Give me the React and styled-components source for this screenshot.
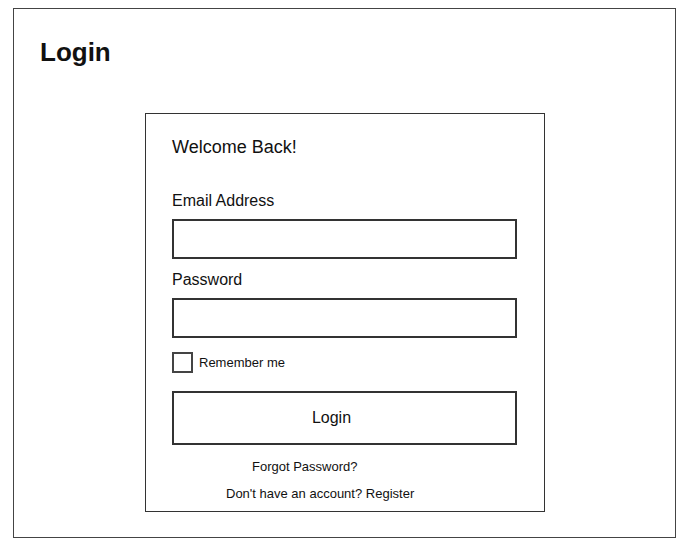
import React from 'react';
import styled, { createGlobalStyle } from 'styled-components';

const GlobalStyle = createGlobalStyle`
  html, body {
    margin: 0;
    padding: 0;
    background: #fff;
  }
  body {
    font-family: "Liberation Sans", Arial, sans-serif;
    color: #111;
  }
`;

const Frame = styled.div`
  box-sizing: border-box;
  margin: 8px 0 0 13px;
  width: 663px;
  height: 530px;
  border: 1.5px solid #444;
  padding: 28px 0 0 26px;
`;

const PageTitle = styled.h1`
  margin: 0;
  font-size: 26px;
  line-height: 30px;
  font-weight: bold;
`;

const Card = styled.form`
  box-sizing: border-box;
  width: 400px;
  height: 399px;
  margin: 46px 0 0 105px;
  border: 1.5px solid #333;
  padding: 22px 27px 0 26px;
  display: flex;
  flex-direction: column;
`;

const Welcome = styled.h2`
  margin: 0 0 33px;
  font-size: 18px;
  line-height: 22px;
  font-weight: normal;
`;

const Label = styled.label`
  font-size: 16px;
  line-height: 20px;
  margin-bottom: 8px;
`;

const Input = styled.input`
  box-sizing: border-box;
  width: 345px;
  height: 40px;
  border: 2px solid #333;
  margin: 0 0 ${p => p.$gap}px;
  padding: 0 8px;
  font: inherit;
  outline: none;
`;

const CheckRow = styled.label`
  display: flex;
  align-items: center;
  gap: 6px;
  font-size: 13px;
  line-height: 20px;
  margin-bottom: 18px;
`;

const Box = styled.span`
  box-sizing: border-box;
  width: 21px;
  height: 21px;
  border: 2px solid #444;
`;

const Button = styled.button`
  box-sizing: border-box;
  width: 345px;
  height: 54px;
  border: 2px solid #333;
  background: #fff;
  font-family: inherit;
  font-size: 16px;
  color: #111;
  padding: 0 26px 0 0;
  margin-bottom: 14px;
`;

const LinkLine = styled.a`
  font-size: 13px;
  line-height: 16px;
  color: #111;
  text-decoration: none;
  padding-left: ${p => p.$indent}px;
  margin-bottom: ${p => p.$gap}px;
`;

export default function App() {
  return (
    <>
      <GlobalStyle />
      <Frame>
        <PageTitle>Login</PageTitle>
        <Card onSubmit={e => e.preventDefault()}>
          <Welcome>Welcome Back!</Welcome>
          <Label>Email Address</Label>
          <Input type="email" $gap={11} />
          <Label>Password</Label>
          <Input type="password" $gap={14} />
          <CheckRow>
            <Box />
            Remember me
          </CheckRow>
          <Button type="submit">Login</Button>
          <LinkLine href="#" $indent={80} $gap={11}>Forgot Password?</LinkLine>
          <LinkLine href="#" $indent={54} $gap={0}>Don't have an account? Register</LinkLine>
        </Card>
      </Frame>
    </>
  );
}
